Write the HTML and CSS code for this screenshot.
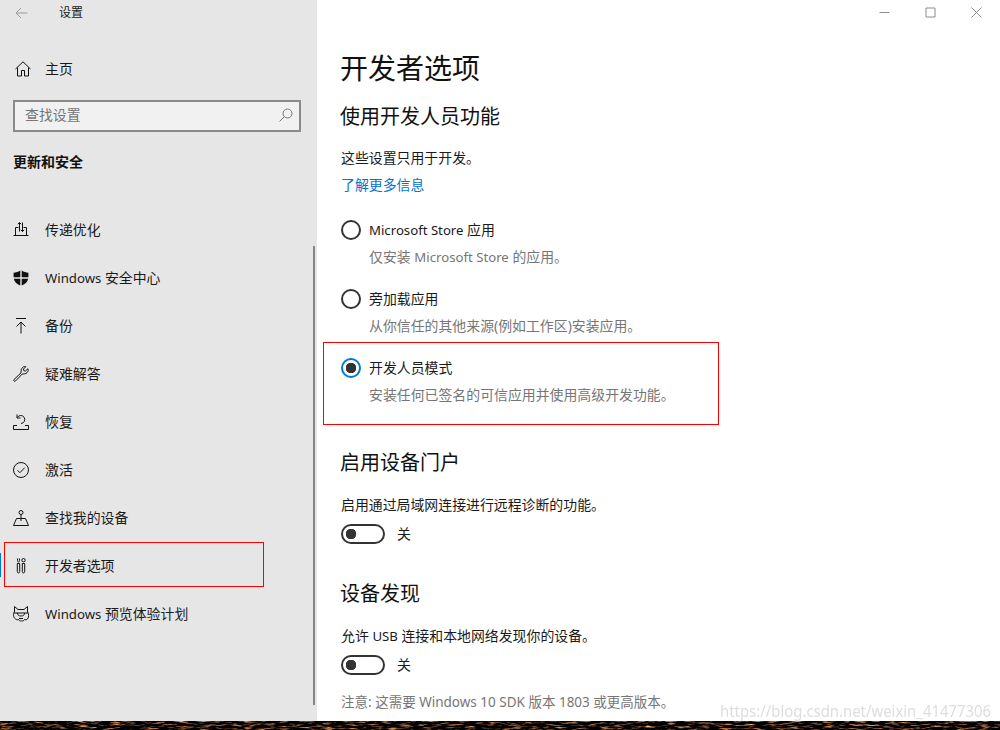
FILE: index.html
```html
<!DOCTYPE html>
<html lang="zh-CN">

<head>
    <meta charset="UTF-8">
    <link rel="stylesheet" href="styles.css">
    <title>设置</title>
</head>

<body>
    <div class="window">
        <aside class="sidebar">
            <div class="titlebar">
                <svg class="back-icon" width="13" height="12" viewBox="0 0 13 12">
                    <path d="M12.500 6H1M6 1L1 6l5 5" />
                </svg>
                <span class="app-title">设置</span>
            </div>

            <div class="nav-item home">
                <svg class="icon" width="16" height="16" viewBox="0 0 16 16">
                    <path d="M.5 8L8 .8 15.5 8M2.5 6.5v8.5h4V9.5h3V15h4V6.5" />
                </svg>
                <span>主页</span>
            </div>

            <div class="search">
                <span>查找设置</span>
                <svg width="14" height="14" viewBox="0 0 14 14">
                    <circle cx="8.5" cy="5.5" r="4.5" />
                    <path d="M5.3 8.7L.5 13.5" />
                </svg>
            </div>

            <h2 class="section-title">更新和安全</h2>

            <nav class="nav">
                <div class="nav-item">
                    <svg class="icon" width="16" height="16" viewBox="0 0 16 16">
                        <path d="M.5 13.500h15M2.500 13.500v-8h3M13.500 13.500v-8h-3M6.500 9.500v-9M4.800 2.200L6.500 .5l1.700 1.700M9.500 .5v9M7.800 7.800l1.700 1.700 1.700-1.700" />
                    </svg>
                    <span>传递优化</span>
                </div>
                <div class="nav-item">
                    <svg class="icon" width="16" height="16" viewBox="0 0 16 16">
                        <path class="solid" d="M7.3 .6C5.3 2 3 2.6 .6 2.7v4.6h6.7zM8.7 .6C10.7 2 13 2.6 15.4 2.7v4.6H8.7zM.8 8.7c.5 3 2.800 5.300 6.500 6.700V8.700zM15.200 8.700c-.5 3-2.800 5.300-6.500 6.700V8.700z" />
                    </svg>
                    <span><span class="en">Windows</span> 安全中心</span>
                </div>
                <div class="nav-item">
                    <svg class="icon" width="16" height="16" viewBox="0 0 16 16">
                        <path d="M3 .5h10M8 15.500V4M3.500 8.500L8 4l4.500 4.500" />
                    </svg>
                    <span>备份</span>
                </div>
                <div class="nav-item">
                    <svg class="icon" width="16" height="16" viewBox="0 0 16 16">
                        <path d="M10.500 .8l-2.300 2.300 0 1.500-.2 2.300L1 13.500c-.6.8-.3 1.500.3 1.700.5.200 1 0 1.400-.4L9.300 8l2.400-.2c1.800-.2 3.300-1.700 3.500-3.300.1-.7 0-1.300-.2-1.800L12.500 5l-1.700-.3-.3-1.700L12.800.7c-.8-.3-1.600-.2-2.300.1z" />
                    </svg>
                    <span>疑难解答</span>
                </div>
                <div class="nav-item">
                    <svg class="icon" width="16" height="16" viewBox="0 0 16 16">
                        <path d="M.5 15.500h15v-4h-3.500M4 11.500H.5v4M4.200 3.700A4 4 0 1 1 8 9.500M4 .5V4h3.500" />
                    </svg>
                    <span>恢复</span>
                </div>
                <div class="nav-item">
                    <svg class="icon" width="16" height="16" viewBox="0 0 16 16">
                        <circle cx="8" cy="8" r="7.500" />
                        <path d="M4.500 8.300l2.400 2.400 4.800-5" />
                    </svg>
                    <span>激活</span>
                </div>
                <div class="nav-item">
                    <svg class="icon" width="16" height="16" viewBox="0 0 16 16">
                        <circle cx="8" cy="2.500" r="2" />
                        <path d="M8 4.500V11M.5 15.500L3.500 8.500h9l3 7z" />
                    </svg>
                    <span>查找我的设备</span>
                </div>
                <div class="nav-item current">
                    <svg class="icon" width="16" height="16" viewBox="0 0 16 16">
                        <path d="M4.500 .5v2c0 1 .5 1.500 1 1.500s1-.5 1-1.500v-2M4.300 5.500v8c0 2 2.400 2 2.400 0v-8zM9.300 5.500v8c0 2 2.400 2 2.400 0v-8z" />
                        <circle cx="10.500" cy="2.200" r="1.700" />
                    </svg>
                    <span>开发者选项</span>
                </div>
                <div class="nav-item">
                    <svg class="icon" width="16" height="16" viewBox="0 0 16 16">
                        <path d="M1.500 .5l3.500 3h6l3.500-3v5.500c1.500 1 1.500 5.500 0 7-.8.8-2 1-3 .5-.5 2-5.500 2-6 0-1 .5-2.200.3-3-.5C0 11.500 0 7 1.500 6zM.8 7h14.400M4.500 7c0 2 1 3 3.500 3s3.500-1 3.500-3M6 12.500h4" />
                    </svg>
                    <span><span class="en">Windows</span> 预览体验计划</span>
                </div>
            </nav>

            <div class="side-scroll"></div>
            <div class="mark mark-nav"></div>
        </aside>

        <main class="content">
            <div class="window-controls">
                <svg width="11" height="11" viewBox="0 0 11 11"><path d="M.5 5.500h10" /></svg>
                <svg width="11" height="11" viewBox="0 0 11 11"><path d="M1 1h9v9H1z" /></svg>
                <svg width="11" height="11" viewBox="0 0 11 11"><path d="M.5 .5l10 10M10.500 .5l-10 10" /></svg>
            </div>

            <h1>开发者选项</h1>

            <h3>使用开发人员功能</h3>
            <p class="intro">这些设置只用于开发。</p>
            <a class="link" href="#">了解更多信息</a>

            <div class="radio-list">
                <div class="radio-row">
                    <span class="radio"></span>
                    <span class="radio-label"><span class="en">Microsoft Store</span> 应用</span>
                    <span class="radio-desc">仅安装 <span class="en">Microsoft Store</span> 的应用。</span>
                </div>
                <div class="radio-row">
                    <span class="radio"></span>
                    <span class="radio-label">旁加载应用</span>
                    <span class="radio-desc">从你信任的其他来源(例如工作区)安装应用。</span>
                </div>
                <div class="radio-row">
                    <span class="radio checked"></span>
                    <span class="radio-label">开发人员模式</span>
                    <span class="radio-desc">安装任何已签名的可信应用并使用高级开发功能。</span>
                </div>
            </div>

            <h3 class="portal-title">启用设备门户</h3>
            <p class="toggle-text">启用通过局域网连接进行远程诊断的功能。</p>
            <div class="toggle-row">
                <span class="toggle"></span>
                <span>关</span>
            </div>

            <h3 class="discovery-title">设备发现</h3>
            <p class="toggle-text">允许 <span class="en">USB</span> 连接和本地网络发现你的设备。</p>
            <div class="toggle-row">
                <span class="toggle"></span>
                <span>关</span>
            </div>
            <p class="note">注意: 这需要 Windows 10 SDK 版本 1803 或更高版本。</p>

            <div class="mark mark-radio"></div>
        </main>

        <div class="watermark">https://blog.csdn.net/weixin_41477306</div>
    </div>

    <svg class="desktop-strip" width="1000" height="9">
        <filter id="bark" x="0" y="0" width="100%" height="100%" color-interpolation-filters="sRGB">
            <feTurbulence type="fractalNoise" baseFrequency="0.09 0.55" numOctaves="3" seed="7" />
            <feColorMatrix values="2.600 0 0 0 -1.250  1.700 0 0 0 -0.820  0.900 0 0 0 -0.420  0 0 0 0 1" />
        </filter>
        <rect width="1000" height="9" filter="url(#bark)" />
    </svg>
</body>

</html>
```

FILE: styles.css
```css
html,
body {
    margin: 0;
    padding: 0;
    height: 730px;
    overflow: hidden;
}

body {
    font-family: "Noto Sans", "Noto Sans CJK SC", sans-serif;
    font-size: 13.9px;
    line-height: 20px;
    color: #1a1a1a;
    background: #fff;
}

svg {
    fill: none;
    stroke: currentColor;
    stroke-width: 1;
    flex-shrink: 0;
}

.en {
    font-size: 13.2px;
}

.window {
    position: relative;
    display: flex;
    height: 721px;
    overflow: hidden;
}

/* left column */
.sidebar {
    position: relative;
    width: 317px;
    flex-shrink: 0;
    background: #e6e6e6;
}

.titlebar {
    display: flex;
    align-items: center;
    height: 25px;
    padding-left: 15px;
    font-size: 12px;
}

.back-icon {
    color: #9a9a9a;
}

.app-title {
    margin-left: 31px;
}

.nav-item {
    position: relative;
    display: flex;
    align-items: center;
    height: 48px;
    padding-left: 13px;
}

.nav-item .icon {
    margin-right: 16px;
    color: #111;
}

.nav-item .solid {
    fill: currentColor;
    stroke: none;
}

.home {
    margin-top: 20px;
    padding-left: 15px;
}

.home .icon {
    margin-right: 14px;
}

.search {
    display: flex;
    align-items: center;
    justify-content: space-between;
    box-sizing: border-box;
    width: 288px;
    height: 32px;
    margin: 7px 0 0 13px;
    padding: 0 6px 2px 10px;
    border: 2px solid #8a8a8a;
    background: #f1f1f1;
    color: #767676;
}

.search svg {
    color: #777;
}

.section-title {
    margin: 20px 0 0 13px;
    font-size: 14px;
    line-height: 20px;
    font-weight: 700;
    color: #111;
}

.nav {
    margin-top: 34px;
}

.current::before {
    content: "";
    position: absolute;
    left: 0;
    top: 11px;
    width: 1px;
    height: 24px;
    background: #0078d7;
}

.side-scroll {
    position: absolute;
    left: 313px;
    top: 246px;
    width: 2px;
    height: 459px;
    background: #858585;
}

/* red boxes drawn on top of the screenshot */
.mark {
    position: absolute;
    box-sizing: border-box;
    border: 1px solid #f00;
}

.mark-nav {
    left: 4px;
    top: 542px;
    width: 260px;
    height: 45px;
}

.mark-radio {
    left: 6px;
    top: 342px;
    width: 396px;
    height: 83px;
}

/* right column */
.content {
    position: relative;
    flex: 1;
    padding-left: 24px;
}

.window-controls {
    position: absolute;
    top: 7px;
    right: 18px;
    display: flex;
    gap: 35px;
    color: #8c8c8c;
}

h1 {
    margin: 0 0 0 -1px;
    padding-top: 47px;
    font-size: 28px;
    line-height: 42px;
    font-weight: 400;
    color: #111;
}

h3 {
    margin: 0 0 0 -1px;
    font-size: 20px;
    line-height: 30px;
    font-weight: 400;
    color: #111;
}

.content > h3:first-of-type {
    margin-top: 13px;
}

.intro {
    margin: 16px 0 0;
}

.link {
    display: block;
    margin-top: 7px;
    color: #0073cf;
    text-decoration: none;
}

.radio-list {
    display: flex;
    flex-direction: column;
    gap: 22px;
    margin-top: 25px;
}

.radio-row {
    display: grid;
    grid-template-columns: 20px 1fr;
    column-gap: 8px;
    row-gap: 7px;
    align-items: center;
}

.radio {
    box-sizing: border-box;
    width: 20px;
    height: 20px;
    border: 2px solid #333;
    border-radius: 50%;
}

.radio.checked {
    border-color: #0078d7;
    background: radial-gradient(circle, #333 5px, transparent 5.5px);
}

.radio-desc {
    grid-column: 2;
    color: #767676;
}

.portal-title {
    margin-top: 43px;
}

.discovery-title {
    margin-top: 35px;
}

.toggle-text {
    margin: 17px 0 0;
}

.toggle-row {
    display: flex;
    align-items: center;
    gap: 12px;
    margin-top: 9px;
}

.toggle {
    box-sizing: border-box;
    width: 44px;
    height: 20px;
    border: 2px solid #333;
    border-radius: 10px;
    background: radial-gradient(circle at 8px 8px, #333 5px, transparent 5.5px);
}

.note {
    margin: 17px 0 0;
    font-size: 13.5px;
    color: #767676;
}

.watermark {
    position: absolute;
    left: 720px;
    top: 701px;
    font-size: 17px;
    line-height: 20px;
    color: rgba(170, 170, 170, 0.4);
    white-space: nowrap;
    transform: scaleX(0.875);
    transform-origin: left center;
}

.desktop-strip {
    display: block;
    stroke: none;
}
```
